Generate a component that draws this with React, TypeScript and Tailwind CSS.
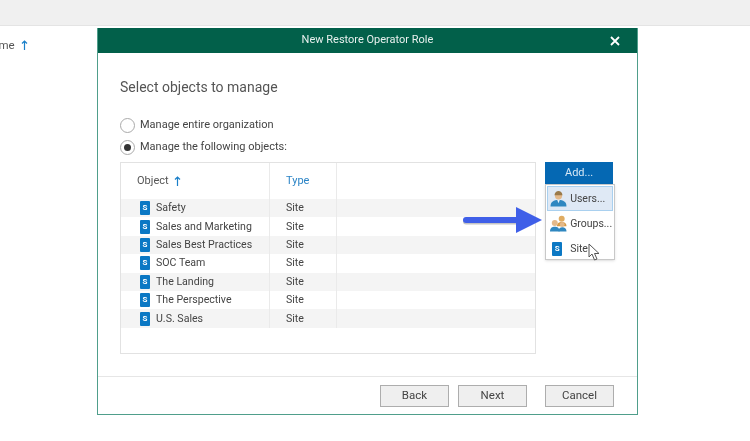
import React from 'react';

const rows = ['Safety', 'Sales and Marketing', 'Sales Best Practices', 'SOC Team', 'The Landing', 'The Perspective', 'U.S. Sales'];

const SiteIcon = () => (
  <span className="relative flex h-[14px] w-[10px] shrink-0 items-center justify-center rounded-[1px] bg-[#0b78c4] text-[8px] leading-none font-bold text-white">
    S
  </span>
);

const SortArrow = () => (
  <svg width="7" height="11" viewBox="0 0 7 11" className="text-[#1a7fc9]">
    <path d="M3.5 10V1M1 3.5L3.5 1L6 3.5" fill="none" stroke="currentColor" strokeWidth="1.2" />
  </svg>
);

const UserIcon = () => (
  <svg width="17" height="17" viewBox="0 0 16 16" className="shrink-0">
    <path d="M0.5 15.5c0-4.500 3-6 7.500-6s7.500 1.500 7.500 6z" fill="#2f87c0" />
    <path d="M6.800 9.500h2.400L8 12.500z" fill="#e8f1f7" />
    <circle cx="8" cy="5.500" r="3.400" fill="#e3b98a" />
    <path d="M4.200 5C4.500 2 6.300 1 8 1s3.500 1 3.800 4z" fill="#9a7a4a" />
  </svg>
);

const GroupIcon = () => (
  <svg width="17" height="17" viewBox="0 0 16 16" className="shrink-0">
    <circle cx="11" cy="3.500" r="2.800" fill="#e0ac62" />
    <path d="M6.500 10.500c0-3 2-4 4.500-4s4.500 1 4.500 4z" fill="#d79a45" />
    <circle cx="4.500" cy="7.500" r="2.800" fill="#e3b98a" />
    <path d="M0 15.500c0-3.500 2-4.500 4.500-4.500S9 12 9 15.500z" fill="#2f87c0" />
    <circle cx="11.500" cy="9" r="2.300" fill="#e3b98a" />
    <path d="M8 15.500c0-3 1.500-4 3.500-4s4 1 4 4z" fill="#2f87c0" />
  </svg>
);

const FooterButton = ({ label }: { label: string }) => (
  <button className="h-[22px] w-[69px] border border-[#adadad] bg-[#efefef] text-[11.500px] text-[#444]">{label}</button>
);

export default function App() {
  return (
    <div className="relative h-[441px] w-[750px] overflow-hidden bg-white font-['Roboto',sans-serif] text-[11px] text-[#444] blur-[0.5px]">
      <div className="h-[26px] border-b border-[#e4e4e4] bg-[#f0f0f0]" />

      <div className="flex items-start">
        <div className="flex h-[30px] w-[97px] items-center gap-[6px] overflow-hidden pt-[9px]">
          <span className="ml-[-16px] text-[11.500px] text-[#555]">Name</span>
          <SortArrow />
        </div>

        <div className="mt-[2px] flex h-[387px] w-[541px] flex-col border-x border-b border-[#4f9e8b]">
          <div className="relative flex h-[25px] shrink-0 items-center justify-center bg-[#02604a] text-[11px] text-[#e8f0ee]">
            New Restore Operator Role
            <svg width="10" height="10" viewBox="0 0 10 10" className="absolute right-[17px]">
              <path d="M1 1L9 9M9 1L1 9" stroke="#fff" strokeWidth="1.800" />
            </svg>
          </div>

          <div className="flex min-h-0 flex-1 flex-col px-[22px]">
            <h1 className="mt-[22px] text-[14px] leading-[24px] text-[#555]">Select objects to manage</h1>

            <div className="mt-[18px] flex flex-col gap-[6px]">
              <label className="flex h-[16px] items-center gap-[5px]">
                <span className="h-[15px] w-[15px] rounded-full border border-[#aaa] bg-white" />
                Manage entire organization
              </label>
              <label className="flex h-[16px] items-center gap-[5px]">
                <span className="flex h-[15px] w-[15px] items-center justify-center rounded-full border border-[#aaa] bg-white">
                  <span className="h-[7px] w-[7px] rounded-full bg-[#333]" />
                </span>
                Manage the following objects:
              </label>
            </div>

            <div className="mt-[7px] flex gap-[9px]">
              <div className="relative h-[192px] w-[417px] border border-[#e2e2e2]">
                <div className="flex h-[36px] items-center">
                  <div className="flex w-[149px] items-center gap-[5px] pl-[16px] text-[#555]">
                    Object
                    <SortArrow />
                  </div>
                  <div className="w-[67px] pl-[16px] text-[#2b84c6]">Type</div>
                </div>
                <div className="text-[10.600px]">
                  {rows.map((name, i) => (
                    <div key={name} className={`flex h-[18.400px] items-center ${i % 2 === 0 ? 'bg-[#f4f4f4]' : ''}`}>
                      <div className="flex w-[149px] items-center gap-[6px] pl-[19px]">
                        <SiteIcon />
                        {name}
                      </div>
                      <div className="w-[67px] pl-[16px]">Site</div>
                    </div>
                  ))}
                </div>
                {/* column dividers */}
                <div className="absolute top-0 left-[148px] h-[165px] w-px bg-[#eaeaea]" />
                <div className="absolute top-0 left-[215px] h-[165px] w-px bg-[#eaeaea]" />
              </div>

              <div className="flex w-[70px] flex-col">
                <button className="h-[22px] w-[68px] bg-[#0568b3] text-[11px] text-[#d7e8f5]">Add...</button>
                <div className="flex h-[76px] flex-col border border-[#c8c8c8] bg-white p-[1px] shadow-sm">
                  <div className="flex h-[25px] shrink-0 items-center gap-[3px] border border-[#a9d0ef] bg-[#dfe9f5] pl-[2px] text-[10.500px]">
                    <UserIcon />
                    Users...
                  </div>
                  <div className="flex h-[25px] shrink-0 items-center gap-[3px] pl-[3px] text-[10.500px]">
                    <GroupIcon />
                    Groups...
                  </div>
                  <div className="flex h-[24px] shrink-0 items-center gap-[8px] pt-[1px] pl-[5px] text-[10.500px]">
                    <SiteIcon />
                    Site
                  </div>
                </div>
              </div>
            </div>
          </div>

          <div className="flex h-[38px] shrink-0 items-center justify-end border-t border-[#e6e6e6] pr-[23px]">
            <div className="flex gap-[9px]">
              <FooterButton label="Back" />
              <FooterButton label="Next" />
            </div>
            <div className="ml-[18px]">
              <FooterButton label="Cancel" />
            </div>
          </div>
        </div>
      </div>

      {/* annotation arrow */}
      <svg width="84" height="36" viewBox="0 0 84 36" className="absolute top-[204px] left-[462px]">
        <path d="M4 17.500h50" stroke="#8a8a8a" strokeOpacity=".5" strokeWidth="6" strokeLinecap="round" />
        <path d="M4 16h50" stroke="#3f5fe8" strokeWidth="6" strokeLinecap="round" />
        <path d="M54 3L80 16L54 29z" fill="#3f5fe8" />
      </svg>

      {/* mouse cursor */}
      <svg width="13" height="19" viewBox="0 0 13 19" className="absolute top-[243px] left-[588px]">
        <path d="M1 1v13l3-3 2.500 6 2.500-1-2.500-5.500H11z" fill="#fff" stroke="#555" strokeWidth="1" strokeLinejoin="round" />
      </svg>
    </div>
  );
}
